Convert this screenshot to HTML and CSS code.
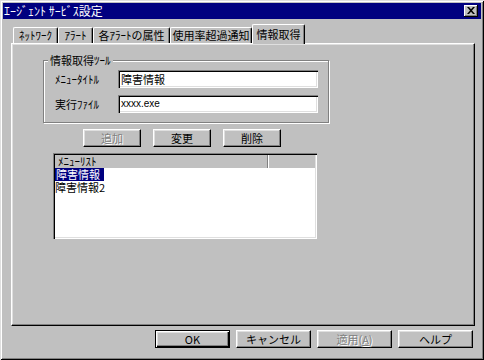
FILE: index.html
```html
<!DOCTYPE html>
<html>

<head>
    <meta charset="UTF-8">
    <title>ｴｰｼﾞｪﾝﾄ ｻｰﾋﾞｽ設定</title>
    <link rel="stylesheet" href="styles.css">
</head>

<body>
    <div class="window">
        <div class="titlebar">
            <span class="title">ｴｰｼﾞｪﾝﾄ ｻｰﾋﾞｽ設定</span>
            <span class="close">
                <svg width="8" height="7" viewBox="0 0 8 7"><path d="M0 0h2l2 2.2L6 0h2L5 3.5 8 7H6L4 4.8 2 7H0l3-3.5z" fill="#000"/></svg>
            </span>
        </div>
        <div class="tabs">
            <div class="tab tab-net">ﾈｯﾄﾜｰｸ</div>
            <div class="tab tab-alert">ｱﾗｰﾄ</div>
            <div class="tab tab-attr">各ｱﾗｰﾄの属性</div>
            <div class="tab tab-usage">使用率超過通知</div>
            <div class="tab tab-info active">情報取得</div>
        </div>
        <div class="panel">
            <div class="group">
                <span class="legend">情報取得ﾂｰﾙ</span>
                <div class="row">
                    <span class="label">ﾒﾆｭｰﾀｲﾄﾙ</span>
                    <div class="field">障害情報</div>
                </div>
                <div class="row">
                    <span class="label">実行ﾌｧｲﾙ</span>
                    <div class="field field-file">xxxx.exe</div>
                </div>
            </div>
            <div class="actions">
                <button class="btn btn-sm" disabled>追加</button>
                <button class="btn btn-sm">変更</button>
                <button class="btn btn-sm">削除</button>
            </div>
            <div class="list">
                <div class="list-head">
                    <span class="col-name">ﾒﾆｭｰﾘｽﾄ</span>
                    <span class="col-rest"></span>
                </div>
                <div class="item"><span class="sel">障害情報</span></div>
                <div class="item">障害情報2</div>
            </div>
        </div>
        <div class="footer">
            <button class="btn btn-lg btn-default">OK</button>
            <button class="btn btn-lg">キャンセル</button>
            <button class="btn btn-lg" disabled>適用(<u>A</u>)</button>
            <button class="btn btn-lg">ヘルプ</button>
        </div>
    </div>
</body>

</html>
```

FILE: styles.css
```css
* {
    box-sizing: border-box;
}

body {
    margin: 0;
    background-color: #c0c0c0;
    font-family: "Noto Sans CJK JP", "Liberation Sans", sans-serif;
    font-size: 11px;
    color: #000;
}

.window {
    width: 484px;
    height: 360px;
    padding: 3px;
    background-color: #c0c0c0;
    box-shadow: inset 1px 1px #dfdfdf, inset -1px -1px #000, inset 2px 2px #fff, inset -2px -2px #808080;
}

.titlebar {
    height: 16px;
    background-color: #000080;
    color: #fff;
    display: flex;
    align-items: center;
    justify-content: space-between;
    padding: 0 3px 0 1px;
    line-height: 16px;
}

.title {
    font-size: 12px;
}

.close {
    width: 14px;
    height: 12px;
    background-color: #c0c0c0;
    box-shadow: inset -1px -1px #000, inset 1px 1px #fff, inset -2px -2px #808080;
    display: flex;
    align-items: center;
    justify-content: center;
    padding: 0 1px 1px 0;
}

/* tab strip */
.tabs {
    display: flex;
    align-items: flex-end;
    height: 19px;
    margin: 5px 0 0 10px;
    position: relative;
    z-index: 1;
}

.tab {
    height: 16px;
    line-height: 14px;
    text-align: center;
    white-space: nowrap;
    background-color: #c0c0c0;
    border-top: 1px solid #fff;
    border-left: 1px solid #fff;
    border-right: 1px solid #000;
    border-radius: 2px 2px 0 0;
    box-shadow: inset -1px 0 #808080;
}

.tab-net { width: 45px; }
.tab-alert { width: 35px; }
.tab-attr { width: 77px; }
.tab-usage { width: 82px; }
.tab-info { width: 53px; }

.tab.active {
    height: 20px;
    line-height: 18px;
    margin-bottom: -1px;
}

.panel {
    height: 283px;
    margin: 0 6px 0 8px;
    border: 1px solid;
    border-color: #fff #000 #000 #fff;
    box-shadow: inset -1px -1px #808080, inset 1px 1px #dfdfdf;
    padding: 16px 0 0 31px;
}

/* group box */
.group {
    position: relative;
    width: 286px;
    height: 63px;
    border: 1px solid #808080;
    box-shadow: 1px 1px #fff, inset 1px 1px #fff;
    padding: 9px 0 0 11px;
    display: flex;
    flex-direction: column;
    gap: 7px;
}

.legend {
    position: absolute;
    top: -7px;
    left: 4px;
    padding: 0 2px;
    line-height: 12px;
    background-color: #c0c0c0;
}

.row {
    display: flex;
    align-items: center;
    height: 18px;
}

.label {
    width: 63px;
}

.field {
    width: 200px;
    height: 18px;
    background-color: #fff;
    box-shadow: inset 1px 1px #808080, inset 2px 2px #000, inset -1px -1px #fff, inset -2px -2px #dfdfdf;
    padding: 0 3px;
    line-height: 18px;
}

.field-file {
    font-family: "Liberation Sans", sans-serif;
    font-size: 10px;
}

.actions {
    display: flex;
    gap: 12px;
    margin: 6px 0 0 40px;
}

/* buttons */
.btn {
    font: inherit;
    color: #000;
    padding: 0;
    background-color: #c0c0c0;
    border: 1px solid;
    border-color: #fff #000 #000 #fff;
    box-shadow: inset -1px -1px #808080, inset 1px 1px #dfdfdf;
    line-height: 14px;
}

.btn:disabled {
    color: #808080;
    text-shadow: 1px 1px #fff;
}

.btn-sm {
    width: 58px;
    height: 18px;
}

.btn-lg {
    width: 75px;
    height: 18px;
}

.btn-default {
    border-color: #000;
    box-shadow: inset 1px 1px #fff, inset -1px -1px #000, inset -2px -2px #808080, inset 2px 2px #dfdfdf;
}

/* list view */
.list {
    width: 264px;
    height: 86px;
    margin: 6px 0 0 10px;
    background-color: #fff;
    box-shadow: inset 1px 1px #808080, inset 2px 2px #000, inset -1px -1px #fff, inset -2px -2px #dfdfdf;
    padding: 2px;
}

.list-head {
    display: flex;
    height: 13px;
    background-color: #c0c0c0;
    line-height: 13px;
}

.col-name {
    width: 213px;
    padding-left: 3px;
    border-right: 1px solid #808080;
}

.col-rest {
    flex: 1;
    border-left: 1px solid #fff;
}

.item {
    height: 13px;
    line-height: 13px;
}

.sel {
    display: inline-block;
    background-color: #000080;
    color: #fff;
    padding: 0 4px 0 1px;
}

.footer {
    display: flex;
    justify-content: flex-end;
    gap: 6px;
    margin-top: 4px;
    padding-right: 8px;
}
```
